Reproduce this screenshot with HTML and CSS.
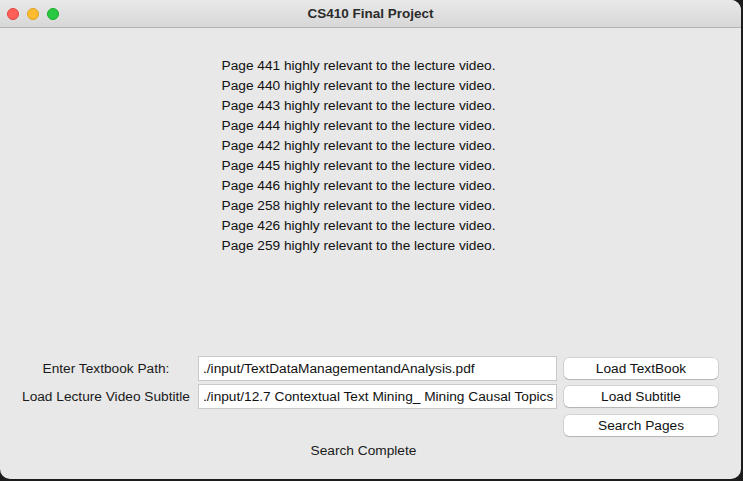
FILE: index.html
```html
<!DOCTYPE html>
<html>
<head>
<meta charset="utf-8">
<link rel="stylesheet" href="styles.css">
</head>
<body>
<div class="window">
  <div class="titlebar">
    <div class="lights">
      <span class="light red"></span>
      <span class="light yellow"></span>
      <span class="light green"></span>
    </div>
    <div class="title">CS410 Final Project</div>
  </div>
  <div class="content">
    <div class="results">
      <div>Page 441 highly relevant to the lecture video.</div>
      <div>Page 440 highly relevant to the lecture video.</div>
      <div>Page 443 highly relevant to the lecture video.</div>
      <div>Page 444 highly relevant to the lecture video.</div>
      <div>Page 442 highly relevant to the lecture video.</div>
      <div>Page 445 highly relevant to the lecture video.</div>
      <div>Page 446 highly relevant to the lecture video.</div>
      <div>Page 258 highly relevant to the lecture video.</div>
      <div>Page 426 highly relevant to the lecture video.</div>
      <div>Page 259 highly relevant to the lecture video.</div>
    </div>
    <div class="form">
      <div class="label">Enter Textbook Path:</div>
      <div class="input">./input/TextDataManagementandAnalysis.pdf</div>
      <div class="cell"><div class="btn">Load TextBook</div></div>

      <div class="label">Load Lecture Video Subtitle</div>
      <div class="input">./input/12.7 Contextual Text Mining_ Mining Causal Topics</div>
      <div class="cell"><div class="btn">Load Subtitle</div></div>

      <div class="label"></div>
      <div></div>
      <div class="cell cell-low"><div class="btn">Search Pages</div></div>

      <div class="status">Search Complete</div>
    </div>
  </div>
</div>
</body>
</html>
```

FILE: styles.css
```css
html, body {
  margin: 0;
  padding: 0;
  background: #1c1c1c;
}
body {
  width: 743px;
  height: 481px;
  overflow: hidden;
  font-family: "Liberation Sans", Arial, sans-serif;
  font-size: 13.7px;
  color: #111;
}
.window {
  width: 741px;
  height: 479px;
  background: #e8e8e8;
  border-radius: 0 10px 10px 10px;
  overflow: hidden;
  display: flex;
  flex-direction: column;
}
.titlebar {
  height: 27px;
  border-bottom: 1px solid #b3b3b3;
  background: linear-gradient(#e9e9e9, #d7d7d7);
  display: flex;
  align-items: center;
  justify-content: center;
  position: relative;
}
.lights {
  position: absolute;
  left: 7px;
  top: 8px;
  display: flex;
  gap: 8px;
}
.light {
  width: 12px;
  height: 12px;
  border-radius: 50%;
  box-sizing: border-box;
}
.red { background: #fe5f57; border: 1px solid #e0443e; }
.yellow { background: #febc2e; border: 1px solid #dea123; }
.green { background: #28c840; border: 1px solid #1aab29; }
.title {
  font-weight: bold;
  font-size: 13.5px;
  color: #2b2b2b;
}
.content {
  padding-right: 24px;
}
.results {
  margin-top: 28px;
  text-align: center;
  line-height: 20px;
  color: #111;
}
.form {
  margin-top: 100px;
  display: grid;
  grid-template-columns: 170px 359px 154px;
  column-gap: 7px;
  row-gap: 3px;
  margin-left: 21px;
  grid-auto-rows: 25px;
}
.label {
  display: flex;
  justify-content: center;
  align-items: center;
  white-space: nowrap;
  color: #1a1a1a;
}
.input {
  background: #fff;
  border: 1px solid #c9c9c9;
  box-sizing: border-box;
  line-height: 23px;
  padding-left: 4px;
  white-space: nowrap;
  overflow: hidden;
  color: #111;
}
.cell {
  display: flex;
  align-items: center;
}
.cell-low {
  padding-top: 2px;
}
.btn {
  width: 154px;
  height: 21px;
  box-sizing: border-box;
  background: #fff;
  border-radius: 5px;
  box-shadow: 0 0 0 0.5px rgba(0,0,0,0.18), 0 1px 1px rgba(0,0,0,0.15);
  text-align: center;
  line-height: 21px;
  color: #111;
}
.status {
  grid-column: 1 / -1;
  text-align: center;
  line-height: 18px;
  margin-top: 2px;
  padding-right: 12px;
  color: #1a1a1a;
}
```
